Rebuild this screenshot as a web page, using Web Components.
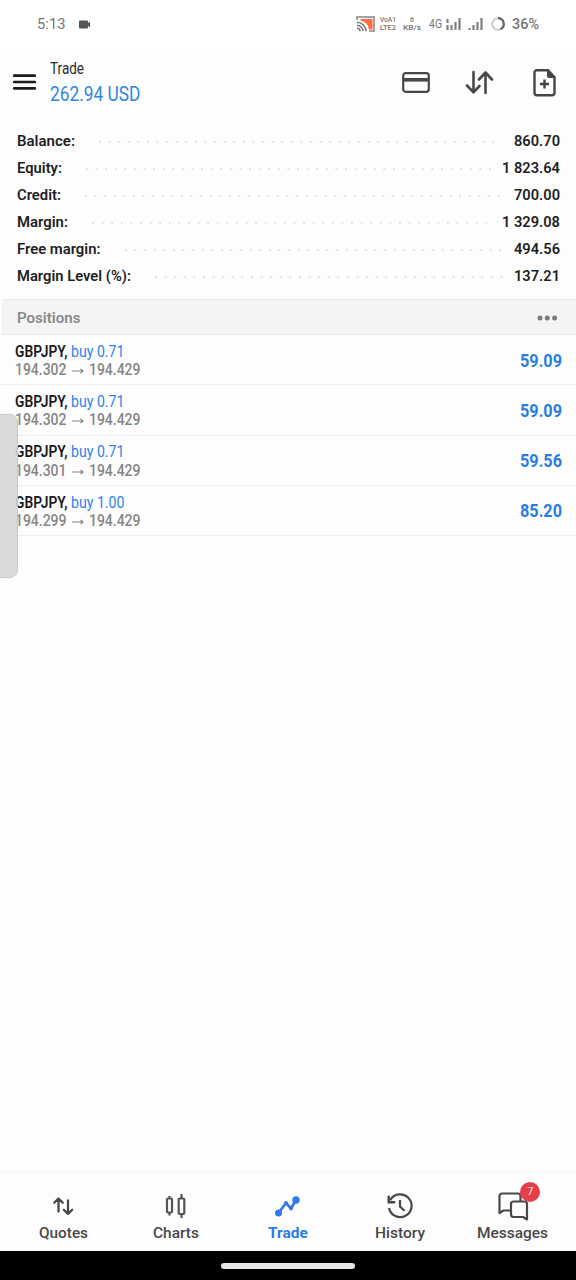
<!DOCTYPE html>
<html lang="en">
<head>
<meta charset="utf-8">
<title>Trade</title>
<style>
    body {
        margin: 0;
        background: #fdfdfd;
        font-family: Roboto, "Liberation Sans", sans-serif;
    }
</style>
</head>
<body>
<trade-app></trade-app>

<script>
const ICONS = {
    camera: '<rect x="0" y="0.500" width="9" height="8" rx="1" fill="#555"/><path d="M8 4l3-2.500v6L8 5z" fill="#555"/>',
    cast: '<path d="M1 4V1h17v14h-5" fill="none" stroke="#858585" stroke-width="1.500"/><path d="M4.500 3h12v10.500h-3.500Q12 6 4.500 4.500z" fill="#ff6d3a"/><path d="M1 6.300a9 9 0 0 1 9 9M1 9.300a6 6 0 0 1 6 6M1 12.300a3 3 0 0 1 3 3" fill="none" stroke="#777" stroke-width="1.500"/>',
    signalData: '<path d="M1.500 1v4M1.500 7v5M5.500 7v5M9.500 4v8M13.500 0v12" stroke="#808080" stroke-width="2.200" fill="none"/>',
    signal: '<path d="M1.500 10v2M5.500 7v5M9.500 4v8M13.500 0v12" stroke="#808080" stroke-width="2.200" fill="none"/>',
    ring: '<circle cx="7" cy="7" r="5.800" fill="none" stroke="#ccc" stroke-width="2"/><path d="M7 1.200a5.800 5.800 0 0 1 2.500 11" fill="none" stroke="#666" stroke-width="2.200"/>',
    menu: '<path d="M1.200 1.700h20.600M1.200 8h20.600M1.200 14.300h20.600" stroke="#1b1b1b" stroke-width="2.700" stroke-linecap="round"/>',
    card: '<rect x="1.200" y="1.200" width="25.600" height="18.600" rx="2.500" fill="none" stroke="#484848" stroke-width="2.200"/><path d="M1 7.800h26" stroke="#484848" stroke-width="3.600"/>',
    sort: '<path d="M8.500 1v20M2 14.500l6.500 6.800 6-6.300M20.500 22V2M14 8.500l6.500-7 6.500 7" fill="none" stroke="#484848" stroke-width="2.600" stroke-linecap="round" stroke-linejoin="round"/>',
    add: '<path d="M4 1.200h11l6.500 7v15.600a2.500 2.500 0 0 1-2.500 2.500H4a2.500 2.500 0 0 1-2.500-2.500V3.700A2.500 2.500 0 0 1 4 1.200z" fill="none" stroke="#444" stroke-width="2.400"/><path d="M14 1l8 8h-6q-2 0-2-2z" fill="#444"/><path d="M11.500 10.500v9M7 15h9" stroke="#444" stroke-width="2.400"/>',
    dots: '<g fill="#7b7b7b"><circle cx="3" cy="3" r="2.500"/><circle cx="10.300" cy="3" r="2.500"/><circle cx="17.600" cy="3" r="2.500"/></g>',
    arrow: '<path d="M0 4h11M8.500 2l2.500 2-2.500 2" fill="none" stroke="#888" stroke-width="1.200"/>',
    quotes: '<path d="M5.500 14.500V2M1.200 5.700l4.300-4.200 4.300 4.200M15 3.500v13M10.800 12.700l4.200 4.200 4.200-4.200" fill="none" stroke="#484848" stroke-width="2.300" stroke-linecap="round" stroke-linejoin="round"/>',
    charts: '<g fill="none" stroke="#555" stroke-width="2.200"><rect x="2" y="4.500" width="5" height="14" rx="1"/><path d="M4.500 2v3M4.500 18.500v3M16.500 0v4.500M16.500 20v4"/><rect x="13.700" y="4.500" width="5.600" height="15.500" rx="1"/></g>',
    trade: '<path d="M3.500 17l7.500-10 5 5.500L21 4" fill="none" stroke="#3478ec" stroke-width="2.700" stroke-linejoin="round"/><g fill="#3478ec"><circle cx="3.500" cy="17" r="3.500"/><circle cx="21" cy="4" r="3.700"/><circle cx="11" cy="7" r="1.900"/><circle cx="16" cy="12.500" r="1.900"/></g>',
    history: '<path d="M3.200 7.200a11.400 11.400 0 1 1-1.200 7.800" fill="none" stroke="#484848" stroke-width="2.200"/><path d="M1.700 2.800v6.500h6.500" fill="none" stroke="#484848" stroke-width="2.400"/><path d="M13 7v6.500l4.500 4.200" fill="none" stroke="#484848" stroke-width="2.200"/>',
    messages: '<g fill="#fdfdfd" stroke="#484848" stroke-width="2.200" stroke-linejoin="round"><path d="M4 1.500h16a2.500 2.500 0 0 1 2.500 2.500v14.500H5.500l-4 2.500V4A2.500 2.500 0 0 1 4 1.500z"/><path d="M15.500 9.500h11a2.500 2.500 0 0 1 2.500 2.500v15.500l-4-2.500h-9.500a2.500 2.500 0 0 1-2.500-2.500V12a2.500 2.500 0 0 1 2.500-2.500z"/></g>'
};

// <ui-icon name="card" w="28" h="21">
class UiIcon extends HTMLElement {
    constructor() {
        super();
        this.attachShadow({ mode: 'open' });
    }
    connectedCallback() {
        const w = this.getAttribute('w');
        const h = this.getAttribute('h');
        this.shadowRoot.innerHTML = `
            <style>
                :host { display: block; flex: none; width: ${w}px; height: ${h}px; }
                svg { display: block; overflow: visible; }
            </style>
            <svg width="${w}" height="${h}">${ICONS[this.getAttribute('name')]}</svg>`;
    }
}

// One line of text squeezed to a fixed width, for the condensed labels
class UiText extends HTMLElement {
    constructor() {
        super();
        this.attachShadow({ mode: 'open' });
    }
    connectedCallback() {
        const w = Number(this.getAttribute('w'));
        const size = Number(this.getAttribute('size') || 15);
        const weight = this.getAttribute('weight') || 400;
        this.shadowRoot.innerHTML = `
            <style>
                :host { display: block; flex: none; width: ${w}px; height: ${size * 1.2}px; }
                span {
                    display: inline-block;
                    vertical-align: top;
                    white-space: pre;
                    transform-origin: 0 0;
                    font-size: ${size}px;
                    line-height: ${size * 1.2}px;
                    font-weight: ${weight};
                }
            </style><span>${this.getAttribute('text')}</span>`;
        const span = this.shadowRoot.querySelector('span');
        const natural = span.getBoundingClientRect().width;
        if (natural > 0) {
            span.style.transform = `scaleX(${w / natural})`;
        }
    }
}

class StatusBar extends HTMLElement {
    constructor() {
        super();
        this.attachShadow({ mode: 'open' });
        this.shadowRoot.innerHTML = `
            <style>
                :host {
                    display: flex;
                    align-items: center;
                    box-sizing: border-box;
                    height: 48px;
                    padding: 0 37px;
                    background: #fff;
                    color: #757575;
                }
                .right { display: flex; align-items: center; margin-left: auto; }
                .pair { display: flex; flex-direction: column; align-items: center; }
            </style>
            <ui-text text="5:13" w="28.500" size="14.500" style="margin-top: 2px"></ui-text>
            <ui-icon name="camera" w="11" h="9" style="margin-left: 13.500px"></ui-icon>
            <div class="right">
                <ui-icon name="cast" w="19" h="16"></ui-icon>
                <div class="pair" style="margin-left: 5px">
                    <ui-text text="VoA1" w="16" size="7" weight="500"></ui-text>
                    <ui-text text="LTE2" w="16" size="7" weight="500"></ui-text>
                </div>
                <div class="pair" style="margin-left: 7px">
                    <ui-text text="6" w="4" size="7" weight="500"></ui-text>
                    <ui-text text="KB/s" w="18" size="7" weight="500"></ui-text>
                </div>
                <ui-text text="4G" w="13" size="12" style="margin-left: 8px"></ui-text>
                <ui-icon name="signalData" w="15" h="12" style="margin-left: 4px"></ui-icon>
                <ui-icon name="signal" w="15" h="12" style="margin-left: 7px"></ui-icon>
                <ui-icon name="ring" w="14" h="14" style="margin-left: 8px"></ui-icon>
                <ui-text text="36%" w="27" size="14" weight="500" style="margin-left: 7px"></ui-text>
            </div>`;
    }
}

class AppHeader extends HTMLElement {
    constructor() {
        super();
        this.attachShadow({ mode: 'open' });
        this.shadowRoot.innerHTML = `
            <style>
                :host {
                    display: flex;
                    box-sizing: border-box;
                    height: 79px;
                    padding: 11px 20px 0 13px;
                    color: #2a2a2a;
                }
                .titles { margin-left: 13.500px; }
                .amount { color: #2f86e5; margin-top: 4px; }
                .actions { display: flex; align-items: center; height: 47px; margin-left: auto; }
            </style>
            <ui-icon name="menu" w="23" h="16" style="margin-top: 15px"></ui-icon>
            <div class="titles">
                <ui-text text="Trade" w="34" size="16"></ui-text>
                <ui-text class="amount" text="262.94 USD" w="90.500" size="21"></ui-text>
            </div>
            <div class="actions">
                <ui-icon name="card" w="28" h="21"></ui-icon>
                <ui-icon name="sort" w="28" h="23" style="margin-left: 35px"></ui-icon>
                <ui-icon name="add" w="23" h="27" style="margin-left: 40px"></ui-icon>
            </div>`;
    }
}

class AccountRow extends HTMLElement {
    constructor() {
        super();
        this.attachShadow({ mode: 'open' });
    }
    connectedCallback() {
        const a = name => this.getAttribute(name);
        this.shadowRoot.innerHTML = `
            <style>
                :host { display: flex; align-items: center; height: 27px; color: #1f1f1f; }
                .dots {
                    flex: 1;
                    height: 2px;
                    margin: 2px ${a('right')}px 0 24px;
                    background: radial-gradient(circle at 1px 1px, #e2e2e2 1px, transparent 1.4px) 0 0 / 9.6px 2px repeat-x;
                }
            </style>
            <ui-text text="${a('label')}" w="${a('lw')}" size="15" weight="600"></ui-text>
            <div class="dots"></div>
            <ui-text text="${a('value')}" w="${a('vw')}" size="15" weight="600"></ui-text>`;
    }
}

class SectionTitle extends HTMLElement {
    constructor() {
        super();
        this.attachShadow({ mode: 'open' });
        this.shadowRoot.innerHTML = `
            <style>
                :host {
                    display: flex;
                    align-items: center;
                    justify-content: space-between;
                    box-sizing: border-box;
                    height: 36px;
                    margin-left: 2px;
                    padding: 2px 19px 0 15px;
                    background: #f4f4f4;
                    border-top: 1px solid #e9e9e9;
                    border-bottom: 1px solid #ebebeb;
                    color: #8a8a8a;
                }
            </style>
            <ui-text text="Positions" w="63.500" size="15" weight="600"></ui-text>
            <ui-icon name="dots" w="20.500" h="6"></ui-icon>`;
    }
}

class PositionRow extends HTMLElement {
    constructor() {
        super();
        this.attachShadow({ mode: 'open' });
    }
    connectedCallback() {
        const a = name => this.getAttribute(name);
        this.shadowRoot.innerHTML = `
            <style>
                :host {
                    display: flex;
                    align-items: center;
                    justify-content: space-between;
                    box-sizing: border-box;
                    height: 50.300px;
                    padding: 2px 14.500px 0 14.500px;
                    border-bottom: 1px solid #efeff2;
                }
                .line { display: flex; align-items: center; height: 18px; }
                .symbol { color: #1a1a1a; }
                .side { color: #2f82ee; margin-left: 3.500px; }
                .prices { color: #858585; }
                .profit { color: #2a7de0; }
            </style>
            <div>
                <div class="line">
                    <ui-text class="symbol" text="GBPJPY," w="52.500" size="16.500" weight="600"></ui-text>
                    <ui-text class="side" text="${a('side')}" w="53.500" size="16.500"></ui-text>
                </div>
                <div class="line prices">
                    <ui-text text="${a('open')}" w="51.500" size="16" weight="500"></ui-text>
                    <ui-icon name="arrow" w="12" h="8" style="margin: 3px 5.500px 0 5.500px"></ui-icon>
                    <ui-text text="194.429" w="51.500" size="16" weight="500"></ui-text>
                </div>
            </div>
            <ui-text class="profit" text="${a('profit')}" w="42" size="18.500" weight="700"></ui-text>`;
    }
}

class NavItem extends HTMLElement {
    constructor() {
        super();
        this.attachShadow({ mode: 'open' });
    }
    connectedCallback() {
        const a = name => this.getAttribute(name);
        this.shadowRoot.innerHTML = `
            <style>
                :host {
                    display: flex;
                    flex-direction: column;
                    align-items: center;
                    color: #484848;
                }
                :host([active]) { color: #2b7cf0; }
                .icon { display: flex; align-items: center; position: relative; height: 36px; margin-bottom: 1px; }
                slot { display: block; }
            </style>
            <div class="icon">
                <ui-icon name="${a('icon')}" w="${a('iw')}" h="${a('ih')}"></ui-icon>
                <slot></slot>
            </div>
            <ui-text text="${a('label')}" w="${a('lw')}" size="14.500" weight="${a('weight') || 500}"></ui-text>`;
    }
}

class NavBadge extends HTMLElement {
    constructor() {
        super();
        this.attachShadow({ mode: 'open' });
        this.shadowRoot.innerHTML = `
            <style>
                :host {
                    position: absolute;
                    right: -12.500px;
                    top: -6.500px;
                    width: 20px;
                    height: 20px;
                    border-radius: 50%;
                    background: #e5404a;
                    color: #ffe0e0;
                    font-size: 11px;
                    line-height: 20px;
                    text-align: center;
                }
            </style>
            <slot></slot>`;
    }
}

class BottomNav extends HTMLElement {
    constructor() {
        super();
        this.attachShadow({ mode: 'open' });
        this.shadowRoot.innerHTML = `
            <style>
                :host {
                    display: grid;
                    grid-template-columns: repeat(5, 112.400px);
                    justify-content: center;
                    box-sizing: border-box;
                    height: 79px;
                    padding-top: 15px;
                    border-top: 1px solid #f6f6f6;
                }
            </style>
            <nav-item icon="quotes" iw="20" ih="18" label="Quotes" lw="49"></nav-item>
            <nav-item icon="charts" iw="21" ih="24" label="Charts" lw="46"></nav-item>
            <nav-item icon="trade" iw="25" ih="21" label="Trade" lw="40" weight="700" active></nav-item>
            <nav-item icon="history" iw="26" ih="26" label="History" lw="50"></nav-item>
            <nav-item icon="messages" iw="30" ih="29" label="Messages" lw="71"><nav-badge>7</nav-badge></nav-item>`;
    }
}

class TradeApp extends HTMLElement {
    constructor() {
        super();
        this.attachShadow({ mode: 'open' });
        this.shadowRoot.innerHTML = `
            <style>
                :host {
                    display: flex;
                    flex-direction: column;
                    position: relative;
                    width: 576px;
                    height: 1280px;
                    overflow: hidden;
                }
                .account { padding: 0 16.500px 0 17px; height: 172px; }
                bottom-nav { margin-top: auto; }
                .gesture {
                    display: flex;
                    justify-content: center;
                    box-sizing: border-box;
                    height: 29px;
                    padding-top: 11.500px;
                    background: #000;
                }
                .pill { width: 134px; height: 6px; border-radius: 3px; background: #e8e6e6; }
                .edge {
                    position: absolute;
                    left: -10px;
                    top: 414px;
                    width: 26px;
                    height: 162px;
                    border: 1px solid #c9c9c9;
                    border-radius: 8px;
                    background: rgba(214, 214, 214, 0.9);
                }
            </style>
            <status-bar></status-bar>
            <app-header></app-header>
            <div class="account">
                <account-row label="Balance:" lw="58" value="860.70" vw="46" right="18"></account-row>
                <account-row label="Equity:" lw="45" value="1 823.64" vw="58" right="10"></account-row>
                <account-row label="Credit:" lw="44" value="700.00" vw="46" right="12"></account-row>
                <account-row label="Margin:" lw="51" value="1 329.08" vw="58" right="12"></account-row>
                <account-row label="Free margin:" lw="83.500" value="494.56" vw="46" right="12"></account-row>
                <account-row label="Margin Level (%):" lw="114" value="137.21" vw="46" right="10"></account-row>
            </div>
            <section-title></section-title>
            <position-row side="buy 0.71" open="194.302" profit="59.09"></position-row>
            <position-row side="buy 0.71" open="194.302" profit="59.09"></position-row>
            <position-row side="buy 0.71" open="194.301" profit="59.56"></position-row>
            <position-row side="buy 1.00" open="194.299" profit="85.20"></position-row>
            <bottom-nav></bottom-nav>
            <div class="gesture"><div class="pill"></div></div>
            <div class="edge"></div>`;
    }
}

customElements.define('ui-icon', UiIcon);
customElements.define('ui-text', UiText);
customElements.define('status-bar', StatusBar);
customElements.define('app-header', AppHeader);
customElements.define('account-row', AccountRow);
customElements.define('section-title', SectionTitle);
customElements.define('position-row', PositionRow);
customElements.define('nav-item', NavItem);
customElements.define('nav-badge', NavBadge);
customElements.define('bottom-nav', BottomNav);
customElements.define('trade-app', TradeApp);
</script>
</body>
</html>
